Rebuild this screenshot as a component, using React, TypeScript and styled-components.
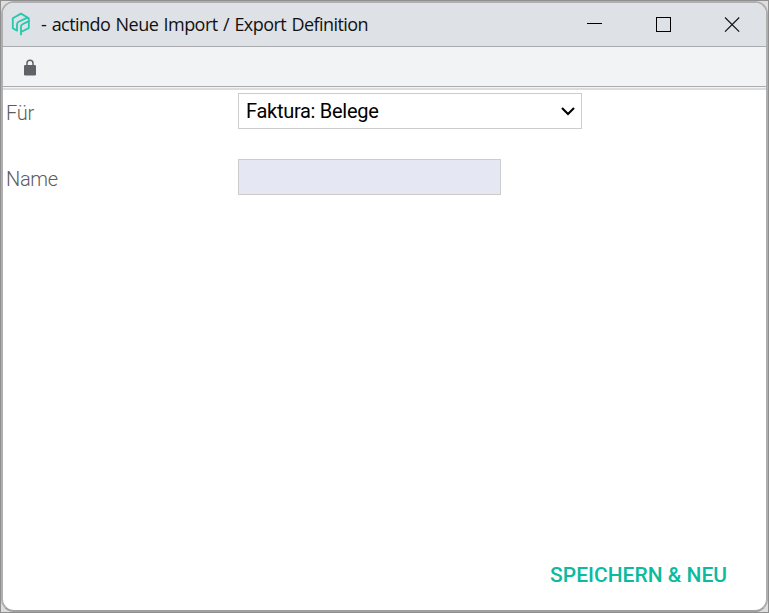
import React from "react";
import styled, { createGlobalStyle } from "styled-components";

const GlobalStyle = createGlobalStyle`
  * { box-sizing: border-box; }
  html, body { margin: 0; height: 100%; overflow: hidden; background: #dedede; }
`;

const Frame = styled.div`
  width: 769px;
  height: 613px;
  border: 1px solid #8f8f8f;
  background: #dedede;
  font-family: Roboto, sans-serif;
`;

const Window = styled.div`
  display: flex;
  flex-direction: column;
  width: 767px;
  height: 611px;
  border: 2px solid #b0afb0;
  border-bottom-color: #a0a0a0;
  border-radius: 13px;
  overflow: hidden;
  background: #fff;
`;

const TitleBar = styled.header`
  display: flex;
  align-items: center;
  flex: none;
  height: 44px;
  padding: 0 26px 2px 8px;
  background: #dee1e6;
  border-bottom: 1px solid #a9abad;
`;

const Title = styled.h1`
  flex: 1;
  margin: 0 0 0 10px;
  font: 400 18px/24px "Open Sans", sans-serif;
  letter-spacing: -0.56px;
  word-spacing: 1.3px;
  color: #111;
  white-space: nowrap;
`;

const WindowControls = styled.div`
  display: flex;
  gap: 53px;
  svg { display: block; }
`;

const AddressBar = styled.div`
  display: flex;
  align-items: center;
  flex: none;
  height: 40px;
  padding: 2px 0 0 21px;
  background: #f1f3f4;
  border-bottom: 1px solid #a9abad;
`;

const Divider = styled.div`
  flex: none;
  height: 3px;
  border-top: 1px solid #f1f3f4;
  background: #dadcdd;
`;

const Form = styled.form`
  display: flex;
  flex: 1;
  flex-direction: column;
  gap: 30px;
  padding: 3px 3px 0;
`;

const Row = styled.div`
  display: grid;
  grid-template-columns: 232px auto;
  justify-content: start;
  height: 36px;
`;

const Label = styled.label`
  padding-top: 2px;
  font-size: 20px;
  font-weight: 300;
  line-height: 36px;
  letter-spacing: -0.3px;
  color: #5c5c5c;
`;

const Select = styled.button`
  display: flex;
  align-items: center;
  justify-content: space-between;
  width: 344px;
  height: 36px;
  padding: 0 6px 0 7px;
  border: 1px solid #ccc;
  background: #fff;
  font: 400 20px/34px Roboto, sans-serif;
  letter-spacing: -0.28px;
  color: #000;
`;

const Input = styled.input`
  width: 263px;
  height: 36px;
  border: 1px solid #ccc;
  border-radius: 0;
  background: #e5e7f3;
`;

const Footer = styled.footer`
  display: flex;
  justify-content: flex-end;
  margin-top: auto;
  padding: 0 36px 23px 0;
`;

const SaveButton = styled.button`
  padding: 0;
  border: 0;
  background: none;
  font: 500 21px/24px Roboto, sans-serif;
  color: #0abb9e;
`;

const Logo = () => (
  <svg width="20" height="24" viewBox="0 0 20 24" fill="none" stroke="#27c8ac" strokeWidth="1.8" strokeLinejoin="round">
    <path d="M17.8 10V6.2L10 1.6 1.8 6.3v10L6 18.6v-6.2q0-1.7 1.6-2.6l9.5-4.4" />
    <path d="M10 23.2v-8.5q0-1.6 1.5-2.4l6.3-3.2v7L10.5 19.8" />
  </svg>
);

export default function App() {
  return (
    <>
      <GlobalStyle />
      <Frame>
        <Window>
          <TitleBar>
            <Logo />
            <Title>- actindo Neue Import / Export Definition</Title>
            <WindowControls>
              <svg width="16" height="16" stroke="#000"><path d="M1 7.5h15" /></svg>
              <svg width="16" height="16" fill="none" stroke="#000"><rect x="1.5" y="1.5" width="14" height="14" /></svg>
              <svg width="16" height="16" stroke="#111" strokeWidth="1.1"><path d="m1 1.5 14.2 14.2M15.2 1.5 1 15.7" /></svg>
            </WindowControls>
          </TitleBar>
          <AddressBar>
            <svg width="12" height="17" viewBox="0 0 12 17">
              <path d="M3 7V4.2a3 3 0 0 1 6 0V7" fill="none" stroke="#5f6368" strokeWidth="1.5" />
              <rect y="6" width="12" height="10.5" rx="1.3" fill="#5f6368" />
            </svg>
          </AddressBar>
          <Divider />
          <Form>
            <Row>
              <Label>Für</Label>
              <Select type="button">
                Faktura: Belege
                <svg width="14" height="10" fill="none" stroke="#000" strokeWidth="2.1"><path d="m1 2 6 6 6-6" /></svg>
              </Select>
            </Row>
            <Row>
              <Label htmlFor="name">Name</Label>
              <Input id="name" />
            </Row>
            <Footer>
              <SaveButton type="button">SPEICHERN &amp; NEU</SaveButton>
            </Footer>
          </Form>
        </Window>
      </Frame>
    </>
  );
}
